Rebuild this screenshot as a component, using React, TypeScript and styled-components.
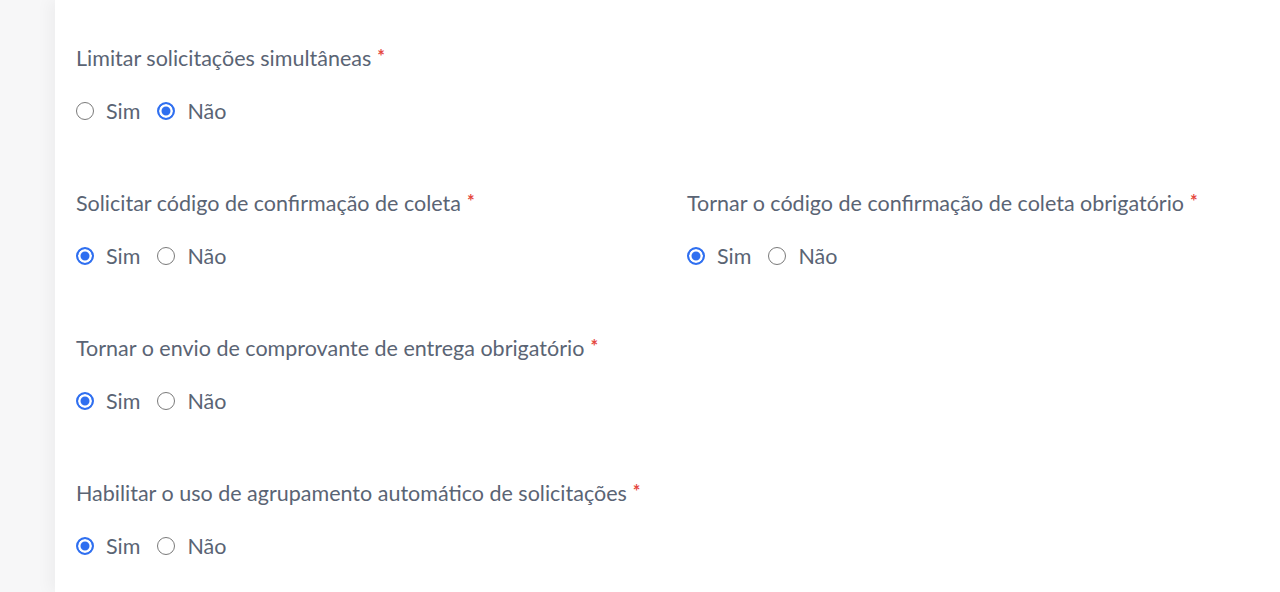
import React from "react";
import styled, { createGlobalStyle } from "styled-components";

const Global = createGlobalStyle`
  html, body { margin: 0; padding: 0; background: #f7f7f8; }
  body { font-family: Lato, "Noto Sans", sans-serif; }
`;

const Page = styled.div`
  display: flex;
  min-height: 592px;
  padding-left: 55px;
  background: #f7f7f8;
`;

const Card = styled.div`
  flex: 1;
  background: #ffffff;
  box-shadow: -6px 0 14px rgba(0, 0, 0, 0.04);
  padding: 45px 21px 0 21px;
`;

const Grid = styled.div`
  display: grid;
  grid-template-columns: 611px 1fr;
  row-gap: 66px;
`;

const Field = styled.div<{ $col?: number }>`
  display: flex;
  flex-direction: column;
  gap: 27px;
  grid-column: ${(p) => p.$col ?? 1};
`;

const Label = styled.div`
  height: 26px;
  font-size: 21.5px;
  line-height: 26px;
  color: #5a6474;
  white-space: nowrap;
`;

const Req = styled.span`
  color: #e5483f;
  font-size: 18px;
  line-height: 1;
  font-weight: 700;
  margin-left: 6px;
  vertical-align: 3px;
`;

const Options = styled.div`
  display: flex;
  align-items: center;
  gap: 17px;
  height: 26px;
`;

const Option = styled.label`
  display: flex;
  align-items: center;
  gap: 12px;
  font-size: 21.5px;
  line-height: 26px;
  color: #5a6474;
  cursor: pointer;
`;

const Dot = styled.span<{ $on: boolean }>`
  box-sizing: border-box;
  width: 18px;
  height: 18px;
  border-radius: 50%;
  border: ${(p) => (p.$on ? "2px solid #2f6ff0" : "1.5px solid #7a7a7a")};
  background: ${(p) => (p.$on ? "#2f6ff0" : "#fff")};
  box-shadow: ${(p) => (p.$on ? "inset 0 0 0 2.5px #fff" : "none")};
  flex: none;
`;

type F = { label: string; value: boolean; col?: number };

const fields: F[] = [
  { label: "Limitar solicitações simultâneas", value: false },
  { label: "Solicitar código de confirmação de coleta", value: true },
  { label: "Tornar o código de confirmação de coleta obrigatório", value: true, col: 2 },
  { label: "Tornar o envio de comprovante de entrega obrigatório", value: true },
  { label: "Habilitar o uso de agrupamento automático de solicitações", value: true },
];

export default function App() {
  return (
    <>
      <Global />
      <Page>
        <Card>
          <Grid>
            {fields.map((f, i) => (
              <Field key={i} $col={f.col}>
                <Label>
                  {f.label}
                  <Req>*</Req>
                </Label>
                <Options>
                  <Option>
                    <Dot $on={f.value} />
                    Sim
                  </Option>
                  <Option>
                    <Dot $on={!f.value} />
                    Não
                  </Option>
                </Options>
              </Field>
            ))}
          </Grid>
        </Card>
      </Page>
    </>
  );
}
